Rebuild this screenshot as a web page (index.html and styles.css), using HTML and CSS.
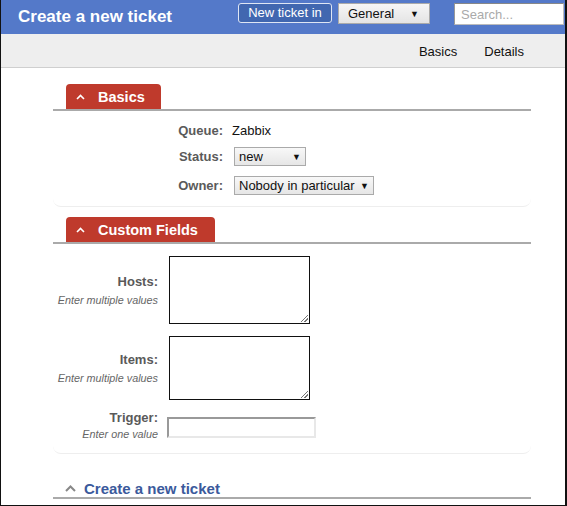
FILE: index.html
```html
<!DOCTYPE html>
<html>
<head>
<meta charset="utf-8">
<link rel="stylesheet" href="styles.css">
</head>
<body>
<div class="page">
  <header class="topbar">
    <h1 class="title">Create a new ticket</h1>
    <div class="top-actions">
      <button class="btn-new">New ticket in</button>
      <div class="fake-select queue-select"><span>General</span><span class="arrow">▼</span></div>
      <input class="search" type="text" placeholder="Search...">
    </div>
  </header>
  <nav class="subnav">
    <span class="subnav-item">Basics</span>
    <span class="subnav-item">Details</span>
  </nav>
  <main class="content">
    <section class="panel">
      <div class="panel-head">
        <div class="tab"><svg class="chev" viewBox="0 0 9 6" width="9" height="6"><polyline points="1,5 4.5,1.5 8,5" fill="none" stroke="#fff" stroke-width="1.6"/></svg>Basics</div>
      </div>
      <div class="panel-body basics">
        <div class="brow r1"><div class="label blabel">Queue:</div><div class="value">Zabbix</div></div>
        <div class="brow r2"><div class="label blabel">Status:</div><div class="value"><div class="small-select sel-status"><span>new</span><span class="arrow">▼</span></div></div></div>
        <div class="brow r3"><div class="label blabel">Owner:</div><div class="value"><div class="small-select sel-owner"><span>Nobody in particular</span><span class="arrow">▼</span></div></div></div>
      </div>
    </section>
    <section class="panel">
      <div class="panel-head">
        <div class="tab tab-wide"><svg class="chev" viewBox="0 0 9 6" width="9" height="6"><polyline points="1,5 4.5,1.5 8,5" fill="none" stroke="#fff" stroke-width="1.6"/></svg>Custom Fields</div>
      </div>
      <div class="panel-body custom">
        <div class="cf-label"><div class="label">Hosts:</div><div class="hint">Enter multiple values</div></div>
        <div class="cf-value"><div class="textarea"><span class="grip"></span></div></div>
        <div class="cf-label"><div class="label">Items:</div><div class="hint">Enter multiple values</div></div>
        <div class="cf-value"><div class="textarea ta-short"><span class="grip"></span></div></div>
        <div class="cf-label trig"><div class="label">Trigger:</div><div class="hint">Enter one value</div></div>
        <div class="cf-value"><input class="text-input" type="text"></div>
      </div>
    </section>
    <section class="panel-last">
      <div class="plain-head"><svg class="chev" viewBox="0 0 11 7" width="11" height="7"><polyline points="1,6 5.5,1.5 10,6" fill="none" stroke="#888" stroke-width="2"/></svg>Create a new ticket</div>
    </section>
  </main>
</div>
</body>
</html>
```
FILE: styles.css
```css
* { box-sizing: border-box; }
html, body { margin: 0; padding: 0; }
body { font-family: "Liberation Sans", Arial, sans-serif; background: #fff; }
.page {
  width: 567px; height: 506px; overflow: hidden;
  border-left: 1px solid #111; border-right: 2px solid #111; border-bottom: 1px solid #111;
}
.topbar {
  height: 34px; background: #5479c9;
  display: flex; align-items: flex-start; justify-content: space-between;
  padding: 0 1px 0 17px;
}
.title { margin: 0; color: #fff; font-size: 17px; font-weight: bold; line-height: 34px; }
.top-actions { display: flex; align-items: flex-start; padding-top: 3px; }
.btn-new {
  width: 94px; height: 20px; margin: 0 6px 0 0; padding: 0;
  background: #4167b0; color: #fff; border: 1px solid #dfe6f4; border-radius: 3px;
  font-family: inherit; font-size: 13px; line-height: 18px;
}
.fake-select {
  display: flex; justify-content: space-between; align-items: center;
  width: 92px; height: 21px; padding: 0 10px 0 9px;
  background: linear-gradient(#f6f6f6, #e4e4e4); border: 1px solid #aaa;
  font-size: 13px; color: #111;
}
.arrow { font-size: 9px; }
.search {
  width: 110px; height: 22px; margin-left: 24px; padding: 0 6px;
  border: 1px solid #bbb; border-top-color: #888; border-left-color: #999;
  font-family: inherit; font-size: 13px;
}
.search::placeholder { color: #aaa; }
.subnav {
  height: 34px; background: #eeeeee; border-bottom: 1px solid #cfcfcf;
  display: flex; justify-content: flex-end; align-items: center; gap: 27px;
  padding: 2px 41px 0 0;
  font-size: 13px; color: #111;
}
.content { padding: 16px 34px 0 52px; }
.panel {
  border-bottom: 1px solid #eeeeee;
  border-radius: 0 0 8px 8px;
}
.panel + .panel { margin-top: 10px; }
.panel-head { border-bottom: 2px solid #aaaaaa; padding-left: 13px; height: 27px; }
.tab {
  display: inline-flex; align-items: center; height: 25px; width: 95px;
  background: #bf3a2c; color: #fff; font-weight: bold; font-size: 14.5px;
  border-radius: 4px 4px 0 0; padding-left: 10px;
}
.tab-wide { width: 149px; }
.chev { display: block; margin-right: 13px; margin-top: 1px; }
.label { font-weight: bold; font-size: 13px; color: #5a5a5a; text-align: right; }
.basics { padding: 9px 0 11px; }
.brow { display: flex; align-items: center; gap: 9px; }
.blabel { width: 170px; }
.r1 { height: 20px; }
.r2 { height: 19px; margin-top: 7px; }
.r3 { height: 19px; margin-top: 10px; }
.value { font-size: 13px; color: #111; }
.small-select {
  display: flex; justify-content: space-between; align-items: center;
  height: 19px; padding: 0 4px 0 4px; margin-left: 2px;
  background: linear-gradient(#f8f8f8, #e6e6e6); border: 1px solid #aaa;
  font-size: 13px; color: #111;
}
.sel-status { width: 72px; }
.sel-owner { width: 140px; }
.custom {
  display: grid; grid-template-columns: 105px 1fr; column-gap: 10px;
  row-gap: 12px; align-items: center;
  padding: 12px 0 13px;
}
.cf-label { display: flex; flex-direction: column; align-items: flex-end; }
.hint { font-size: 10.8px; font-style: italic; color: #666; margin-top: 5px; }
.textarea {
  position: relative; width: 141px; height: 68px; border: 1px solid #111; margin-left: 1px;
}
.ta-short { height: 64px; }
.grip {
  position: absolute; right: 1px; bottom: 1px; width: 7px; height: 7px;
  background: linear-gradient(135deg, transparent 45%, #777 46%, #777 54%, transparent 55%, transparent 70%, #777 71%, #777 79%, transparent 80%);
}
.text-input {
  width: 149px; height: 21px; margin-left: -1px; margin-top: 2px;
  border: 2px solid #e8e8e8; border-top-color: #999; border-left-color: #999;
}
.trig { margin-top: 4px; }
.trig .label { margin-top: -6px; }
.trig .hint { margin-top: 3px; }
.panel-last { margin-top: 25px; }
.plain-head {
  display: flex; align-items: center; height: 20px; padding-left: 12px;
  border-bottom: 2px solid #aaaaaa;
  font-size: 15px; font-weight: bold; color: #3b5a9c;
}
.plain-head .chev { margin-right: 8px; }
```
